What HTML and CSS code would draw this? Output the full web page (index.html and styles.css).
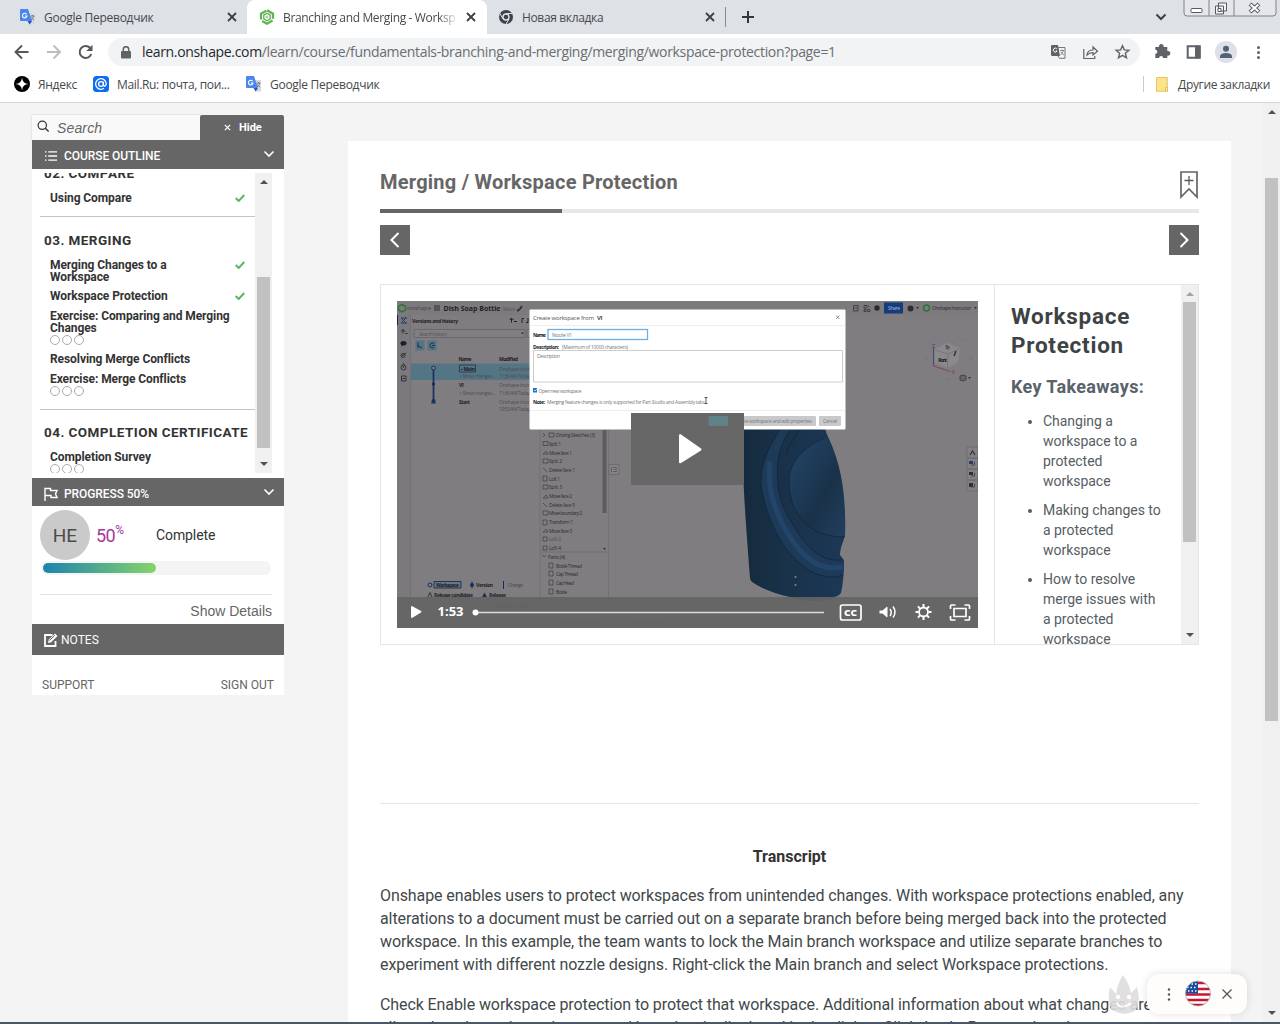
FILE: index.html
```html
<!DOCTYPE html>
<html lang="en">
<head>
<meta charset="utf-8">
<title>Branching and Merging - Workspace Protection</title>
<link rel="stylesheet" href="styles.css">
</head>
<body>
<svg width="0" height="0" class="defs">
  <symbol id="translate" viewBox="0 0 16 16"><path d="M6 4h9v11.500H9z" fill="#d8dadd"/><path d="M1 0h7l4 12H1a1 1 0 0 1-1-1V1a1 1 0 0 1 1-1z" fill="#4a86ee"/><path d="M7.500 12H12l-2.300 3.500z" fill="#2455b8"/><path d="M6.600 5.200A2.300 2.300 0 1 0 7 7H4.900" fill="none" stroke="#fff" stroke-width="1.100"/><path d="M10.500 7h4M12.500 6v1M13.800 7q-1 3-2.800 4M11.500 8.500q1 2 2.500 2.500" fill="none" stroke="#6b7d90"/></symbol>
  <symbol id="close" viewBox="0 0 10 10"><path d="M1 1l8 8M9 1L1 9" stroke="#3c4043" stroke-width="1.800"/></symbol>
  <symbol id="check" viewBox="0 0 10 8"><path d="M.7 4l3 3L9.300 1" fill="none" stroke="#5bb561" stroke-width="2"/></symbol>
  <symbol id="down" viewBox="0 0 12 8"><path d="M1.500 1.500L6 6l4.500-4.500" fill="none" stroke="#fff" stroke-width="1.600"/></symbol>
</svg>

<header class="browser">
  <div class="tabs">
    <div class="tab tab-a"><svg class="fav"><use href="#translate"/></svg><span class="t1">Google Переводчик</span><svg class="x"><use href="#close"/></svg></div>
    <div class="tab tab-b"><svg class="fav" viewBox="0 0 16 16"><path d="M8 1.300l6 3.400v6.600l-6 3.400-6-3.400V4.700z" fill="none" stroke="#5cb947" stroke-width="2.300" stroke-dasharray="12 2"/><path d="M8 4.300l3.200 1.900v3.700L8 11.700 4.800 9.900V6.200z" fill="none" stroke="#66a856" stroke-width="1.300"/><circle cx="8" cy="8" r="1.500" fill="#b9c6b5"/></svg><span class="t2">Branching and Merging - Worksp</span><svg class="x"><use href="#close"/></svg></div>
    <div class="tab tab-c"><svg class="fav chrome" viewBox="0 0 16 16"><circle cx="8" cy="8" r="7" fill="#3f4349"/><circle cx="8" cy="8" r="3" fill="#3f4349" stroke="#dee1e6" stroke-width="1.400"/><path d="M8 4.500h6.500M5 10L1.800 4.300M11 10l-3 5.200" stroke="#dee1e6"/></svg><span class="t3">Новая вкладка</span><svg class="x"><use href="#close"/></svg></div>
    <svg class="plus" viewBox="0 0 12 12"><path d="M6 0v12M0 6h12" stroke="#33373b" stroke-width="2"/></svg>
    <svg class="tabmenu" viewBox="0 0 12 8"><path d="M1.500 1.500L6 6l4.500-4.500" fill="none" stroke="#3c4043" stroke-width="2"/></svg>
    <svg class="winctl" viewBox="0 0 94 18"><path d="M1 0v13q0 3 3 3h86q3 0 3-3V0M26 0v16M51 0v16" fill="#e4e6ea" stroke="#7f848a"/><rect x="8" y="8.500" width="11" height="4" rx="1" fill="#fff" stroke="#555b63"/><path d="M35.500 3h8v8h-8zM32.500 6h8v8h-8z" fill="#f3f4f5" stroke="#555b63"/><path d="M35 8.500h3v3h-3z" fill="#fff" stroke="#555b63"/><path d="M67 4l9 8M76 4l-9 8" stroke="#555b63" stroke-width="4"/><path d="M67.500 4.500l8 7M75.500 4.500l-8 7" stroke="#fff" stroke-width="2"/></svg>
  </div>
  <div class="toolbar">
    <svg class="nav" viewBox="0 0 80 20"><path d="M14.500 10H2M8 3.500L1.500 10 8 16.500" fill="none" stroke="#55595e" stroke-width="1.900"/><path d="M33 10h12.500M39.500 3.500L46 10l-6.500 6.500" fill="none" stroke="#bbbdbf" stroke-width="1.900"/><path d="M76 5.800A6 6 0 1 0 77.300 12" fill="none" stroke="#55595e" stroke-width="2"/><path d="M78.500 2.800V9h-6.200z" fill="#55595e"/></svg>
    <div class="omni">
      <svg class="lock" viewBox="0 0 10 13"><path d="M1 5h8q1 0 1 1v5.500q0 1-1 1H1q-1 0-1-1V6q0-1 1-1z" fill="#5f6368"/><path d="M2.300 5V3.400a2.700 2.700 0 0 1 5.400 0V5" fill="none" stroke="#5f6368" stroke-width="1.500"/></svg>
      <span class="url"><b>learn.onshape.com</b>/learn/course/fundamentals-branching-and-merging/merging/workspace-protection?page=1</span>
      <svg class="omni-icons" viewBox="0 0 80 16"><path d="M.5 1H7l2 11H1.500Q0 12 0 10.500V2z" fill="#5f6368"/><path d="M6 3.500h8v10.800H8.500L7 12" fill="none" stroke="#73777b"/><path d="M5.800 4.800a2 2 0 1 0 .3 2.200H4.600" fill="none" stroke="#fff"/><path d="M9 6.500h4M11 5.500v1M12.500 6.500q-1 3-3 4.500M10 8q1 2 3 3" fill="none" stroke="#73777b" stroke-width=".8"/><path d="M32.800 5v9.500h11V12M36 11q.5-5 6-5V3l4.500 4.200L42 11V8.700q-4 0-6 2.300z" fill="none" stroke="#5f6368" stroke-width="1.200"/><path d="M71.500 1.700l1.800 4.200 4.600.4-3.500 3 1.100 4.500-4-2.400-4 2.400 1.100-4.500-3.500-3 4.600-.4z" fill="none" stroke="#5f6368" stroke-width="1.400"/></svg>
    </div>
    <svg class="actions" viewBox="0 0 112 24"><path d="M2 8h3.700a2.400 2.400 0 1 1 4.600 0H14v4a2.400 2.400 0 1 1 0 4.600V19H9.800a2 2 0 1 0-4 0H2v-4.200a2 2 0 1 0 0-4z" fill="#5f6368" transform="translate(-.7 -1)"/><path d="M33.700 6.200h12v11.600h-12z" fill="#fff" stroke="#5f6368" stroke-width="2"/><path d="M41 5.500h5.500v13H41z" fill="#5f6368"/><circle cx="72" cy="12" r="11" fill="#dde0e6"/><circle cx="72" cy="8.700" r="3" fill="#54607a"/><path d="M66 18v-1.500q0-3.500 6-3.500t6 3.500V18z" fill="#54607a"/><circle cx="104.500" cy="7.500" r="1.500" fill="#5f6368"/><circle cx="104.500" cy="12.500" r="1.500" fill="#5f6368"/><circle cx="104.500" cy="17.500" r="1.500" fill="#5f6368"/></svg>
  </div>
  <div class="bookmarks">
    <svg class="bm" viewBox="0 0 16 16"><circle cx="8" cy="8" r="8" fill="#000"/><path d="M8 1.500q.4 6.100 6.500 6.500-6.100.4-6.500 6.500-.4-6.100-6.500-6.500 6.100-.4 6.500-6.500z" fill="#fff"/></svg><span class="b1">Яндекс</span>
    <svg class="bm" viewBox="0 0 16 16"><rect width="16" height="16" rx="3.500" fill="#0b6cf0"/><circle cx="8" cy="8" r="2.400" fill="none" stroke="#fff" stroke-width="1.300"/><path d="M10.400 5.800v3q.4 1.700 1.900 1 1-.7.900-2.300A5.300 5.300 0 1 0 11 12.300" fill="none" stroke="#fff" stroke-width="1.300"/></svg><span class="b2">Mail.Ru: почта, пои...</span>
    <svg class="bm"><use href="#translate"/></svg><span class="b3">Google Переводчик</span>
    <svg class="folder" viewBox="0 0 12 15"><path d="M.5.500h10.800v13.800H.5z" fill="#fbe28d" stroke="#e6c863"/><path d="M9.500 10.500h2v3.500h-2z" fill="#fff0b5" stroke="#d9b84e" stroke-width=".8"/></svg><span class="b4">Другие закладки</span>
  </div>
</header>

<div class="page">
  <aside class="sidebar">
    <div class="search-row">
      <div class="search"><svg viewBox="0 0 14 14"><circle cx="5.700" cy="5.700" r="4.500" fill="none" stroke="#333" stroke-width="1.300"/><path d="M9 9l3.500 3.500" stroke="#333" stroke-width="1.500"/></svg><i>Search</i></div>
      <div class="hide"><svg viewBox="0 0 8 8"><path d="M1 1l6 6M7 1L1 7" stroke="#fff" stroke-width="1.500"/></svg>Hide</div>
    </div>
    <div class="bar outline-bar"><svg class="bi" viewBox="0 0 14 12"><path d="M3.500 1.500H13M3.500 6H13M3.500 10.500H13M0 1.500h1.600M0 6h1.600M0 10.500h1.600" stroke="#fff" stroke-width="1.400"/></svg><span class="s-outline">COURSE OUTLINE</span><svg class="dn"><use href="#down"/></svg></div>
    <div class="outline">
      <div class="lessons">
        <h3 class="first">02. COMPARE</h3>
        <div class="lesson h20"><span>Using Compare</span><svg><use href="#check"/></svg></div>
        <hr class="h1">
        <h3>03. MERGING</h3>
        <div class="lesson two"><span>Merging Changes to a<br>Workspace</span><svg><use href="#check"/></svg></div>
        <div class="lesson h20"><span>Workspace Protection</span><svg><use href="#check"/></svg></div>
        <div class="lesson ex2"><span>Exercise: Comparing and Merging<br>Changes</span><div class="dots"><i></i><i></i><i></i></div></div>
        <div class="lesson h20"><span>Resolving Merge Conflicts</span></div>
        <div class="lesson ex"><span>Exercise: Merge Conflicts</span><div class="dots"><i></i><i></i><i></i></div></div>
        <hr class="h2">
        <h3 class="last">04. COMPLETION CERTIFICATE</h3>
        <div class="lesson ex"><span>Completion Survey</span><div class="dots"><i></i><i></i><i></i></div></div>
      </div>
      <div class="scroll s-side"><b class="up"></b><div class="thumb"></div><b class="dw"></b></div>
    </div>
    <div class="bar prog-bar"><svg class="bi flag" viewBox="0 0 14 14"><path d="M1 14V1.500h5.500v2H13L11.500 7 13 10.500H7v-2H1" fill="none" stroke="#fff" stroke-width="1.400"/></svg><span class="s-prog">PROGRESS 50%</span><svg class="dn"><use href="#down"/></svg></div>
    <div class="progress">
      <div class="who"><span class="avatar">HE</span><span class="pct">50<sup>%</sup></span><span class="complete">Complete</span></div>
      <div class="track"><div class="fill" style="width:50%"></div></div>
      <div class="details">Show Details</div>
    </div>
    <div class="bar notes-bar"><svg class="bi note" viewBox="0 0 14 14"><path d="M8.500 2H1v11h10.500V8" fill="none" stroke="#fff" stroke-width="1.800"/><path d="M4 10l.7-3.200L11 .5 13.500 3 7.200 9.300z" fill="#fff"/><path d="M5.500 7.500L10.800 2.300" stroke="#666"/></svg><span class="s-notes">NOTES</span></div>
    <div class="links"><span class="l1">SUPPORT</span><span class="l2">SIGN OUT</span></div>
  </aside>

  <main class="card">
    <div class="head"><h1>Merging / Workspace Protection</h1><svg class="ribbon" viewBox="0 0 18 28"><path d="M1 1h16v25l-8-8-8 8z" fill="none" stroke="#666" stroke-width="1.700"/><path d="M9 5v9M4.500 9.500h9" stroke="#555c63" stroke-width="1.300"/></svg></div>
    <div class="steps"><div class="done"></div></div>
    <div class="pager">
      <div class="pg"><svg viewBox="0 0 10 16"><path d="M8.500 1L1.500 8l7 7" fill="none" stroke="#fff" stroke-width="2"/></svg></div>
      <div class="pg"><svg viewBox="0 0 10 16"><path d="M1.500 1l7 7-7 7" fill="none" stroke="#fff" stroke-width="2"/></svg></div>
    </div>
    <div class="viewer">
      <div class="video">
        <svg viewBox="397 301 581 327">
          <defs>
            <linearGradient id="body" x1="0" x2="1" y1="0" y2="0"><stop offset="0" stop-color="#152a3d"/><stop offset=".5" stop-color="#1a334c"/><stop offset="1" stop-color="#1c3855"/></linearGradient>
            <linearGradient id="face" x1="0" x2="1" y1="0" y2="1"><stop offset="0" stop-color="#22476b"/><stop offset=".6" stop-color="#1a3249"/><stop offset="1" stop-color="#213f5e"/></linearGradient>
          </defs>
          <rect x="397" y="301" width="581" height="327" fill="#807d81"/>
          <path d="M397 301h581v14H397z" fill="#7c7a7d"/><path d="M397 315h14v283h-14z" fill="#7b797d"/>
          <path d="M410.500 315v283M540 430v168M608.500 430v168" stroke="#737177"/>
          <g class="vt">
            <path d="M402 304.500l3.500 2v3.500l-3.500 2-3.500-2v-3.500z" fill="none" stroke="#31743b" stroke-width="1.500"/>
            <text x="407" y="310" textLength="24" fill="#444" class="big">onshape</text>
            <path d="M434 306h6M434 308h6M434 310h6" stroke="#333"/>
            <text x="443.500" y="310.500" textLength="57" class="dish">Dish Soap Bottle</text>
            <text x="503" y="310.500" textLength="12" fill="#515055">Main</text>
            <path d="M518 311l4-4M520 308l2-2M517 311l2-2" stroke="#333" stroke-width="1.500"/>
            <path d="M397.500 315v10" stroke="#16243d"/><path d="M401 318l5 5M406 318l-5 5M401 323h6M401 318h6" stroke="#243c67"/>
            <text x="412" y="323" textLength="46" class="vb">Versions and history</text>
            <path d="M511.500 318v4.500M509.500 320l2-2 2 2M514 321.500h3M522 323v-4.500h2M528 318v4.500h-2" fill="none" stroke="#222"/>
            <path d="M414 329.500h111v8H414zM527 329.500h4v8h-4z" fill="#817f83" stroke="#6a686d"/>
            <text x="419" y="335.500" textLength="28" fill="#555">Search history</text><path d="M521 332.500h3l-1.500 2z" fill="#333"/>
            <path d="M415.500 340.500h9v10h-9zM427.500 340.500h9v10h-9z" fill="#547482"/><path d="M418 342.500v5M418 345q0 2.500 4 2.500M434 343.500a2.500 2.500 0 1 0 0 4M432 345.500h3" fill="none" stroke="#1a334e"/>
            <path d="M403 329.500v4M401 331.500l2-2 2 2M405.500 333.500h2M402 356l4-3" fill="none" stroke="#29292e"/><ellipse cx="403.500" cy="343.200" rx="3" ry="2.200" fill="#202024"/><path d="M401.500 344l.2 2.500 2-1.500z" fill="#202024"/><circle cx="403" cy="355.500" r="2" fill="none" stroke="#333"/><circle cx="403.500" cy="367.500" r="2.500" fill="none" stroke="#333"/><path d="M402.500 364h2M403.500 366v2" stroke="#333"/><path d="M401.500 376h4.500v5h-4.500zM402.500 378.500h2.500" fill="none" stroke="#333"/>
            <text x="458.500" y="360.500" textLength="13" class="vb">Name</text><text x="499" y="360.500" textLength="19" class="vb">Modified</text>
            <path d="M411 363.500h120V380H411z" fill="#547583"/>
            <path d="M459.500 365h16v7h-16z" fill="none" stroke="#25344e" stroke-width=".8"/><text x="461" y="370.500" textLength="14" class="vb">▪ Main</text>
            <path d="M433.500 368v34" stroke="#17315f" stroke-width="1.700"/><circle cx="433.500" cy="368" r="1.900" fill="#879" stroke="#17315f"/><circle cx="433.500" cy="384" r="1.700" fill="#17315f"/><circle cx="433.500" cy="401" r="2" fill="#17315f"/><path d="M431 403h5" stroke="#17315f"/>
            <g fill="#4e4e56"><text x="459" y="377.500" textLength="36">&gt; Show changes...</text><text x="499" y="370.500" textLength="31">Onshape Instr</text><text x="499" y="377.500" textLength="31">11:36 AM Today</text><text x="459" y="394.500" textLength="36">&gt; Show changes...</text><text x="499" y="387" textLength="31">Onshape Instr</text><text x="499" y="394.500" textLength="31">11:36 AM Today</text><text x="499" y="404" textLength="31">Onshape Instr</text><text x="499" y="411" textLength="31">10:52 AM Today</text></g>
            <text x="459" y="387" textLength="5" class="vb">V1</text><text x="459" y="404" textLength="11" class="vb">Start</text>
            <g fill="none" stroke="#46444a" stroke-width=".8"><path d="M543 433l2 2-2 2M549 433h5v4h-5zM543 441.500h5v4h-5zM543 454l3-3 2 3zM543 459h5v4h-5zM543 468l4 4M543 476h4v5h-4zM543 485h5v4h-5zM543 498l3-3 2 3zM543 503l4 4M543 511h5v4h-5zM543 520h4v5h-4zM543 532l3-3 2 3zM543 537h4v4h-4zM543 546h4v4h-4zM549 563h4v5h-4zM549 571h4v5h-4zM549 580h4v5h-4zM549 589h4v5h-4zM542 555l2 2 2-2"/></g>
            <g fill="#302f34"><text x="556" y="437" textLength="39">Driving Sketches (3)</text><text x="549" y="445.500" textLength="12">Split 1</text><text x="549" y="454.500" textLength="23">Move face 1</text><text x="549" y="463" textLength="13">Split 2</text><text x="549" y="472" textLength="26">Delete face 1</text><text x="549" y="480.500" textLength="11">Loft 1</text><text x="549" y="489" textLength="13">Split 3</text><text x="549" y="498" textLength="23">Move face 2</text><text x="549" y="506.500" textLength="26">Delete face 5</text><text x="549" y="515" textLength="33">Move boundary 2</text><text x="549" y="524" textLength="24">Transform 1</text><text x="549" y="532.500" textLength="23">Move face 3</text><text x="549" y="541" textLength="12" fill="#555">Loft 2</text><text x="549" y="550" textLength="12">Loft 4</text><text x="548" y="558.500" textLength="17">Parts (4)</text><text x="556" y="567.500" textLength="26">Bottle Thread</text><text x="556" y="576" textLength="22">Cap Thread</text><text x="556" y="585" textLength="18">Cap Head</text><text x="556" y="593.500" textLength="11">Bottle</text></g>
            <path d="M541 552h67M549 539.500h12" stroke="#706e73"/><path d="M602.500 430h4v83h-4z" fill="#5d5b5f"/><path d="M603 548h3l-1.500 2z" fill="#333"/><path d="M609 464.500h10v10h-10z" fill="#858286" stroke="#6e6c70"/><path d="M613 467.500h4M614 469.500h3M613 471.500h4M611.500 467v5" stroke="#555" stroke-width=".8"/>
            <circle cx="430" cy="585" r="2" fill="none" stroke="#1a315b"/><path d="M434 581.500h27v6.500h-27z" fill="#667683" stroke="#223553"/><text x="436" y="586.500" textLength="23" class="vb">Workspace</text><circle cx="472" cy="585" r="2" fill="#152e60"/><path d="M472 581.500v7M503.500 581v8" stroke="#152e60"/><text x="476" y="586.500" textLength="17" class="vb">Version</text><text x="508" y="586.500" textLength="15" fill="#49484d">Change</text><path d="M428 597l2-4.500 2 4.500" fill="none" stroke="#333"/><text x="434" y="597" textLength="39" class="vb">Release candidate</text><path d="M482 597l2.500-4.500 2.500 4.500z" fill="#183058"/><text x="489" y="597" textLength="17" class="vb">Release</text>
            <g fill="none" stroke="#343438" stroke-width=".8"><path d="M853.500 305.500h4.500v5.500h-4.500zM854.500 308h2.500M864 305.500h3v2.500h-3zM864 309.500h2v2h-2zM868 305.500l2 2M867.500 309.500h2.500v2h-2.500z"/></g><circle cx="877" cy="308" r="2.700" fill="#29292e"/><path d="M884 302.500h19v11h-19z" fill="#153c7d"/><text x="888" y="310" textLength="12" fill="#b4bdd1">Share</text><circle cx="910.500" cy="308.500" r="3" fill="#2e2d32"/><path d="M916 307h3l-1.500 2zM974 307h3l-1.500 2z" fill="#333"/><circle cx="926.500" cy="308" r="3" fill="none" stroke="#28763a" stroke-width="1.500"/><text x="932" y="310" textLength="39" fill="#2f2e33">Onshape Instructor</text>
            <path d="M935 349l12-6 13 5-2 14-10 6-13-5z" fill="#8c898d"/><path d="M935 350l13 4 11-5M948 355l-.5 13" fill="none" stroke="#787579"/><path d="M933.500 348v18" stroke="#454d78"/><path d="M933.500 366l17 5.500" stroke="#85464e"/><text x="938" y="362" textLength="9" class="vb">Front</text><text x="945" y="349" textLength="5">Top</text><text x="932" y="348" fill="#263b7d">Z</text><text x="952" y="374" fill="#84303c">X</text><path d="M930 342l7-6M956 335l9 6M924 358l3-2v4zM970 357l3 2-3 1zM945 379h5" fill="none" stroke="#76747a" stroke-width=".8"/><path d="M954 356l2-5" stroke="#333" stroke-width="1.500"/><path d="M960 376l3-1 3 1v4l-3 1-3-1z" fill="#666" stroke="#333" stroke-width=".7"/><path d="M968 377h3l-1.500 2z" fill="#333"/>
            <g fill="#838084" stroke="#6b696e" stroke-width=".8"><path d="M967 447h11v11h-11zM967 458h11v11h-11zM967 469h11v11h-11zM967 480h11v11h-11z"/></g><path d="M970 455l2.500-4 2.500 4" stroke="#34343a" stroke-width="1.300" fill="none"/><path d="M969 461h4v3h-4z" fill="#2c3868"/><path d="M969 472h4v3h-4zM969 483h4v4h-4z" fill="#2d2d34"/><path d="M971 465h3.500v-3M971 476h3.500v-3M971 487h3.500v-3" stroke="#4c4b54" fill="none"/>
          </g>
          <path d="M743 425h81q2 8 5 14c8 20 12 40 14 62 2 16 3 28 1 38q-4 10-4 16l4 5q0 20-3 33-3 4-8 4h-43c-15-3-28-8-38-15q-2-2-2-4c-3-40-9-110-7-153z" fill="url(#body)"/>
          <path d="M780 430c-14 20-20 38-19 56 8 45 30 77 55 88 12 4 20 4 27 1q1-8 1-15c-24 2-38-13-52-37-14-22-16-40-14-62q2-16 12-31z" fill="#1d3a58"/>
          <path d="M770 461c-4 30 8 60 24 82 15 20 32 28 49 24" fill="none" stroke="#254a70" stroke-width="5" opacity=".75"/>
          <path d="M824 438c-22 10-34 24-35 42 0 35 20 57 56 57 1-30-1-67-16-98z" fill="url(#face)"/>
          <g fill="none" stroke="#10243a" stroke-width=".8"><path d="M780 430c-14 20-20 38-19 56 8 45 30 77 55 88 12 4 20 4 27 1M790 430q-10 15-12 31c-2 22 0 40 14 62 14 24 28 39 50 37M824 438c-22 10-34 24-35 42 0 35 20 57 56 57M800 430q-10 11-14 25"/></g>
          <circle cx="795.500" cy="577" r="1" fill="#7c8a98"/><circle cx="795.500" cy="585" r="1" fill="#7c8a98"/>
          <rect x="529.500" y="309.500" width="316" height="120" rx="1" fill="#fff"/>
          <path d="M530 325.500h315M530 410.500h315" stroke="#eee"/>
          <g class="vt dialog"><text x="533" y="319.500" textLength="61" class="dt">Create workspace from</text><text x="597" y="319.500" textLength="6" class="vb dt">V1</text><text x="533" y="336.500" textLength="13" class="vb">Name:</text><rect x="548" y="329.500" width="99.500" height="10" fill="#fff" stroke="#6aaeea" stroke-width="1.300"/><text x="552" y="336.500" textLength="20">Nozzle V1</text><text x="533" y="348.500" textLength="26" class="vb">Description:</text><text x="562" y="348.500" textLength="66">(Maximum of 10000 characters)</text><path d="M533.500 350.500h309v31.500h-309z" fill="#fff" stroke="#ccc"/><text x="537" y="358" textLength="23">Description</text><rect x="533" y="388" width="4" height="4.500" fill="#1b76c7"/><path d="M534 390l1 1 2-2" fill="none" stroke="#fff" stroke-width=".7"/><text x="538.500" y="392.500" textLength="43">Open new workspace</text><text x="533" y="404" textLength="12" class="vb">Note:</text><text x="547" y="404" textLength="158">Merging feature changes is only supported for Part Studio and Assembly tabs</text><path d="M704.500 397.500h3M706 397.500v6M704.500 403.500h3" stroke="#333" stroke-width=".8"/><path d="M836 315.500l3.500 3.500M839.500 315.500L836 319" stroke="#777" stroke-width=".8"/></g>
          <rect x="733" y="416" width="83" height="10" rx="1" fill="#c9c8ca"/><rect x="819" y="416" width="22" height="10" rx="1" fill="#c9c8ca"/><rect x="708.500" y="416" width="19.500" height="10" fill="#72b4c6"/><g class="vt dialog"><text x="712" y="423" textLength="13" fill="#4392ac">Create</text><text x="744" y="423" textLength="68">te workspace and edit properties</text><text x="823" y="423" textLength="14">Cancel</text></g>
          <rect x="631" y="413" width="113" height="72" fill="#676767"/><path d="M708.500 416H728v10h-19.500z" fill="#5f8187"/><path d="M680 434q-1 0-1 2v26q0 2 2 1l20-12.500q1-1 0-2L681 434.500z" fill="#fff"/>
          <rect x="397" y="597" width="581" height="31" fill="#666"/><path d="M791 597h46q-8 4-23 4t-23-4z" fill="#5d6064"/>
          <g class="vt" opacity=".13"><text x="492" y="608" textLength="38">Obsolete version</text><text x="563" y="624" textLength="35">Part Studio</text><text x="634" y="624" textLength="32">Assembly</text></g>
          <path d="M412 606q-1 0-1 1v10q0 1 1 1l9-5.500q1-1 0-1.500z" fill="#fff"/><text x="437.500" y="616" textLength="26" lengthAdjust="spacingAndGlyphs" class="time">1:53</text><path d="M475 612.500h349" stroke="#ddd" stroke-width="1.600"/><circle cx="475.500" cy="612.500" r="3" fill="#fff"/>
          <rect x="840.500" y="605" width="20.500" height="15" rx="2" fill="none" stroke="#fff" stroke-width="1.700"/><text x="844" y="616" textLength="13" lengthAdjust="spacingAndGlyphs" class="cc">CC</text>
          <path d="M879.500 610.500h3l4-3.500q1-.5 1 .5v9q0 1-1 .5l-4-3.500h-3z" fill="#fff"/><path d="M890 609q2.500 3.500 0 7M893 606.500q4 5.500 0 11" fill="none" stroke="#fff" stroke-width="1.500"/>
          <circle cx="923.500" cy="612" r="4.500" fill="none" stroke="#fff" stroke-width="1.800"/><path d="M923.500 604v3M923.500 617v3M915.500 612h3M928.500 612h3M917.900 606.400l2.100 2.100M927 615.500l2.100 2.100M917.900 617.600l2.100-2.100M927 608.500l2.100-2.100" stroke="#fff" stroke-width="2"/>
          <path d="M954 608.500h12v8h-12zM950.500 609v-3q0-1 1-1h4M964.500 605h4q1 0 1 1v3M969.500 616v3q0 1-1 1h-4M955.500 620h-4q-1 0-1-1v-3" fill="none" stroke="#fff" stroke-width="1.700"/>
        </svg>
      </div>
      <div class="takeaways"><h2>Workspace<br>Protection</h2><h4>Key Takeaways:</h4><ul><li>Changing a<br>workspace to a<br>protected<br>workspace</li><li>Making changes to<br>a protected<br>workspace</li><li>How to resolve<br>merge issues with<br>a protected<br>workspace</li></ul></div>
      <div class="scroll s-view"><b class="up"></b><div class="thumb"></div><b class="dw"></b></div>
    </div>
    <div class="rule"></div>
    <h5>Transcript</h5>
    <p><span>Onshape enables users to protect workspaces from unintended changes. With workspace protections enabled, any</span><br><span>alterations to a document must be carried out on a separate branch before being merged back into the protected</span><br><span>workspace. In this example, the team wants to lock the Main branch workspace and utilize separate branches to</span><br><span>experiment with different nozzle designs. Right-click the Main branch and select Workspace protections.</span></p>
    <p>Check Enable workspace protection to protect that workspace. Additional information about what changes are<br>allowed on the main workspace and how they is displayed in the dialog. Click Apply. Protected workspaces can</p>
  </main>
  <div class="scroll s-page"><b class="up"></b><div class="thumb"></div><b class="dw"></b></div>
</div>

<svg class="flame" viewBox="0 0 32 40"><path d="M3 35Q-1 25 2 13l6 7Q10 8 15 1q6 8 8 18l6-6q4 14-1 23-12 8-25-1z" fill="#dedcdd"/><circle cx="10" cy="23" r="2.200" fill="#fff"/><circle cx="21" cy="23" r="2.200" fill="#fff"/><path d="M8 29q7 7 15 0" fill="none" stroke="#fff" stroke-width="2"/></svg>
<div class="widget"><svg viewBox="0 0 100 40"><circle cx="22" cy="15.500" r="1.200" fill="#555"/><circle cx="22" cy="20.500" r="1.200" fill="#555"/><circle cx="22" cy="25.500" r="1.200" fill="#555"/><clipPath id="round"><circle cx="51" cy="19.500" r="12.500"/></clipPath><g clip-path="url(#round)"><path d="M38 7h26v26H38z" fill="#fff"/><path d="M38 9h26M38 15h26M38 20.500h26M38 26h26M38 31h26" stroke="#c9152f" stroke-width="2.700"/><path d="M38 7h13v12.500H38z" fill="#174c9e"/><path d="M41 10h9M40 13.500h10M41 17h9" stroke="#fff" stroke-width="1.300" stroke-dasharray="1.500 2"/></g><circle cx="51" cy="19.500" r="12.500" fill="none" stroke="#aaa" stroke-width=".8"/><path d="M75.500 15.500l9 9M84.500 15.500l-9 9" stroke="#555" stroke-width="1.300"/></svg></div>
</body>
</html>
```
FILE: styles.css
```css
* { box-sizing: border-box; }
body { margin: 0; width: 1280px; height: 1024px; overflow: hidden; font-family: Roboto, sans-serif; color: #333; background: #f4f4f4; border-bottom: 2px solid #4b5668; display: flex; flex-direction: column; }
svg { display: block; flex: none; }
.defs { position: absolute; }
h1, h2, h3, h4, h5, p, ul { margin: 0; padding: 0; }

.browser { flex: none; height: 103px; background: #fff; border-bottom: 1px solid #d5d7d9; font-family: "Open Sans", sans-serif; font-size: 12px; color: #45494d; white-space: nowrap; letter-spacing: -.28px; }
.tabs { height: 34px; display: flex; align-items: center; background: #dee1e6; }
.tab { height: 34px; display: flex; align-items: center; padding-left: 20px; }
.tab span { flex: 1; overflow: hidden; }
.fav { width: 16px; height: 16px; margin-right: 8px; }
.x { width: 10px; height: 10px; }
.tab-a { width: 247px; padding-right: 10px; border-radius: 0 0 8px 0; background: #dee1e6; }
.tab-b { width: 240px; background: #fff; padding: 0 11px 0 12px; border-radius: 8px 8px 0 0; }
.tab-b span { margin-right: 7px; letter-spacing: -.35px; -webkit-mask-image: linear-gradient(90deg, #000 88%, transparent); mask-image: linear-gradient(90deg, #000 88%, transparent); }
.tab-c { width: 239px; height: 20px; padding: 0 10px 0 11px; border-right: 1px solid #888c91; }
.t3 { letter-spacing: -.35px; }
.plus { width: 12px; height: 12px; margin-left: 16px; }
.tabmenu { width: 12px; height: 8px; margin-left: auto; margin-right: 16px; }
.winctl { width: 94px; height: 18px; align-self: flex-start; margin-right: 3px; }
.toolbar { height: 36px; display: flex; align-items: center; padding-left: 14px; }
.nav { width: 80px; height: 20px; }
.omni { width: 1032px; height: 28px; margin-left: 14px; background: #f1f3f4; border-radius: 14px; display: flex; align-items: center; padding: 0 9px 0 13px; }
.lock { width: 10px; height: 13px; margin-right: 11px; }
.url { font-size: 14px; color: #6a6e72; letter-spacing: -.33px; padding-bottom: 1px; }
.url b { font-weight: 400; color: #25282b; }
.omni-icons { width: 80px; height: 16px; margin-left: auto; }
.actions { width: 112px; height: 24px; margin-left: 14px; }
.bookmarks { height: 28px; display: flex; align-items: center; padding: 0 10px 0 14px; }
.bm { width: 16px; height: 16px; margin-right: 8px; }
.b1 { width: 55px; }
.b2 { width: 129px; letter-spacing: -.34px; }
.bookmarks::before { content: ""; order: 1; margin-left: auto; height: 16px; border-left: 1px solid #c9cbcd; }
.folder { order: 2; width: 12px; height: 15px; margin: 0 10px 0 12px; }
.b4 { order: 3; letter-spacing: -.35px; }

.page { flex: 1; min-height: 0; display: flex; align-items: flex-start; overflow: hidden; }
.sidebar { width: 252px; height: 580px; margin: 12px 64px 0 32px; background: #fff; display: flex; flex-direction: column; }
.search-row { height: 25px; display: flex; }
.search { width: 168px; background: #f9f9f9; display: flex; align-items: center; padding-left: 5px; font-family: "Liberation Sans", sans-serif; font-size: 14px; color: #666; box-shadow: 0 0 2px #ccc; }
.search svg { width: 13px; height: 13px; margin-right: 7px; margin-top: -2px; }
.search i { letter-spacing: .15px; }
.hide { flex: 1; background: #666; color: #fff; font-size: 11px; font-weight: 700; display: flex; align-items: center; padding-left: 24px; border-radius: 2px 2px 0 0; }
.hide svg { width: 7px; height: 7px; margin-right: 8px; }
.bar { flex: none; background: #666; color: #fff; font-size: 12px; display: flex; align-items: center; padding: 0 9px 0 13px; }
.outline-bar { height: 29px; padding-top: 3px; font-weight: 500; letter-spacing: -.07px; }
.prog-bar { height: 28px; padding-top: 3px; font-weight: 500; letter-spacing: -.07px; }
.notes-bar { height: 31px; padding-left: 12px; }
.bi { width: 13px; height: 12px; margin-right: 6px; }
.bi.flag, .bi.note { height: 14px; width: 14px; margin-right: 6px; }
.bi.flag { margin-left: -1px; }
.bi.note { margin-right: 3px; }
.dn { width: 12px; height: 8px; margin-left: auto; margin-top: -4px; }
.outline { flex: none; height: 300px; margin: 4px 12px 5px 8px; display: flex; overflow: hidden; }
.lessons { width: 215px; flex: none; }
.lessons h3 { height: 31px; padding: 15px 0 0 4px; font-size: 13.500px; line-height: 16px; font-weight: 700; letter-spacing: .45px; white-space: nowrap; }
.lessons h3.first { height: 15px; padding: 0 0 0 4px; margin-top: -8px; }
.lessons h3.last { height: 30px; padding-top: 14px; }
.lesson { font-size: 12px; line-height: 12px; font-weight: 700; color: #333; padding: 4px 10px 0; display: flex; justify-content: space-between; white-space: nowrap; letter-spacing: -.08px; }
.lesson svg { width: 10px; height: 8px; margin-top: 2px; }
.h20 { height: 20px; }
.h20:nth-child(2) { margin-top: 8px; }
.two { height: 31px; margin-top: 7px; }
.ex, .ex2 { display: block; height: 30px; }
.ex2 { height: 43px; }
.dots { display: flex; gap: 2px; }
.dots i { width: 10px; height: 10px; border: 1px solid #aaa; border-radius: 50%; margin-top: 1px; }
.lessons hr { margin: 8px 0 0; border: 0; height: 1px; background: #c4c4c4; }
.lessons hr.h2 { margin-top: 10px; }
.lessons h3.last + .ex { margin-top: 7px; }

.scroll { width: 17px; flex: none; background: #f0f0f0; display: flex; flex-direction: column; align-items: center; }
.scroll .thumb { width: 13px; background: #c1c1c1; }
.up, .dw { border: 4px solid transparent; height: 0; width: 0; }
.up { border-top: 0; border-bottom: 4px solid #505050; margin-top: 7px; }
.dw { border-bottom: 0; border-top: 4px solid #505050; margin-top: auto; margin-bottom: 7px; }
.s-side .thumb { height: 171px; margin-top: 93px; }

.progress { flex: none; height: 118px; padding: 4px 12px 0 8px; }
.who { height: 50px; display: flex; align-items: center; }
.avatar { width: 50px; height: 50px; border-radius: 50%; background: #cacaca; font-size: 19px; color: #4b4b4b; display: flex; align-items: center; justify-content: center; }
.pct { font-size: 18px; width: 60px; margin-left: 6px; color: #a4379c; white-space: nowrap; letter-spacing: -.5px; }
.pct sup { font-size: 12px; line-height: 0; vertical-align: 8px; }
.complete { font-size: 14px; letter-spacing: -.1px; }
.track { height: 14px; margin: 1px 1px 0; padding: 2px; background: #f4f4f4; border-radius: 7px; }
.fill { height: 10px; border-radius: 5px; background: linear-gradient(90deg, #1d84ad, #87d36b); }
.details { margin-top: 19px; border-top: 1px solid #e2e2e2; font: 14px/33px "Liberation Sans", sans-serif; color: #666; text-align: right; }
.links { flex: 1; display: flex; justify-content: space-between; padding: 22px 10px 0; font-size: 12px; color: #666; line-height: 16px; }

.card { width: 883px; height: 900px; margin-top: 38px; padding: 0 32px; background: #fff; }
.head { height: 68px; display: flex; justify-content: space-between; padding-top: 30px; }
h1 { font-size: 20px; line-height: 23px; color: #666; white-space: nowrap; letter-spacing: .24px; }
.ribbon { width: 18px; height: 28px; margin-right: 1px; }
.steps { height: 4px; background: #e8e8e8; }
.done { width: 182px; height: 4px; background: #666; }
.pager { display: flex; justify-content: space-between; margin-top: 12px; }
.pg { width: 30px; height: 30px; background: #666; display: flex; align-items: center; justify-content: center; }
.pg svg { width: 10px; height: 16px; }
.viewer { height: 361px; margin-top: 29px; border: 1px solid #e5e5e5; display: flex; overflow: hidden; }
.video { width: 614px; padding: 16px; border-right: 1px solid #e5e5e5; flex: none; }
.video svg { width: 581px; height: 327px; }
.vt { font: 5px "Open Sans", sans-serif; fill: #38373c; }
.vb { font-weight: 700; fill: #202027; }
.big { font-size: 6px; }
.dish { font-size: 7px; font-weight: 700; fill: #222; }
.dialog { fill: #777; }
.dt { font-size: 6px; fill: #555; }
.time { font: 700 12px "Open Sans", sans-serif; fill: #fff; }
.cc { font: 800 9px "Open Sans", sans-serif; fill: #fff; }
.takeaways { width: 186px; padding: 17px 0 0 16px; white-space: nowrap; }
h2 { font-size: 22.500px; line-height: 29px; color: #3d4345; letter-spacing: .75px; }
h4 { font-size: 18px; line-height: 22px; margin-top: 16px; color: #59636b; letter-spacing: .35px; }
ul { padding-left: 32px; margin-top: 13px; font-size: 14px; line-height: 20px; color: #555d63; }
li { margin-bottom: 9px; letter-spacing: -.03px; }
.s-view .thumb { height: 240px; margin-top: 6px; }
.s-view .up { border-bottom-color: #a3a3a3; }
.rule { height: 1px; margin-top: 158px; background: #e5e5e5; }
h5 { font-size: 16px; line-height: 24px; margin: 41px 0 15px; text-align: center; color: #333; }
p { font-size: 16px; line-height: 23px; margin-bottom: 17px; color: #42484a; white-space: nowrap; letter-spacing: -.093px; }
.s-page { height: 919px; margin-left: auto; }
.s-page .thumb { height: 543px; margin-top: 64px; }

.flame { position: absolute; left: 1108px; top: 974px; width: 32px; height: 40px; opacity: .9; }
.widget { position: absolute; left: 1147px; top: 974px; width: 100px; height: 40px; border-radius: 12px; background: #fffdfc; box-shadow: 0 0 8px rgba(0,0,0,.12); }
```
